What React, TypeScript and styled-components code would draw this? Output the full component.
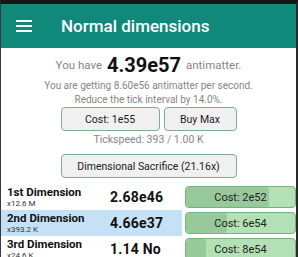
import React from "react";
import styled, { createGlobalStyle } from "styled-components";

const Global = createGlobalStyle`
  html, body { margin: 0; padding: 0; background: #ffffff; }
  body { font-family: Roboto, "Noto Sans", Arial, sans-serif; }
`;

const Frame = styled.div`
  width: 298px;
  height: 257px;
  box-sizing: border-box;
  border-top: 4px solid #161616;
  border-right: 2px solid #2a2a2a;
  border-left: 1px solid #3a3a3a;
  overflow: hidden;
  background: #fff;
  display: flex;
  flex-direction: column;
`;

const Header = styled.div`
  height: 44px;
  flex: none;
  background: #10897a;
  display: flex;
  align-items: center;
  padding-left: 15px;
  gap: 29px;
`;

const Title = styled.div`
  color: #fff;
  font-size: 17px;
  font-weight: 500;
`;

const Center = styled.div`
  display: flex;
  flex-direction: column;
  align-items: center;
`;

const HaveLine = styled.div`
  margin-top: 4px;
  height: 26px;
  display: flex;
  align-items: center;
  gap: 5px;
  color: #858585;
  font-size: 11.5px;
`;

const Big = styled.span`
  color: #111;
  font-size: 20px;
  font-weight: 700;
`;

const Info = styled.div<{ $size: number; $h: number }>`
  color: #868686;
  font-size: ${(p) => p.$size}px;
  height: ${(p) => p.$h}px;
  line-height: ${(p) => p.$h}px;
`;

const ButtonRow = styled.div<{ $mt: number }>`
  display: flex;
  gap: 4px;
  margin-top: ${(p) => p.$mt}px;
`;

const GrayButton = styled.div<{ $w: number }>`
  width: ${(p) => p.$w}px;
  height: 24px;
  box-sizing: border-box;
  border: 1px solid #7fae86;
  border-radius: 4px;
  background: #f0f0f0;
  color: #222;
  font-size: 10.5px;
  display: flex;
  align-items: center;
  justify-content: center;
`;

const Rows = styled.div`
  margin-top: 6px;
  display: flex;
  flex-direction: column;
`;

const Row = styled.div<{ $hl?: boolean }>`
  height: 26px;
  display: flex;
  align-items: center;
  background: ${(p) => (p.$hl ? "#c5e1f6" : "transparent")};
  margin-right: 114px;
  padding-left: 6px;
  position: relative;
`;

const Names = styled.div`
  width: 103px;
  display: flex;
  flex-direction: column;
`;

const Name = styled.div`
  font-size: 11.5px;
  font-weight: 700;
  color: #111;
  line-height: 13px;
`;

const Mult = styled.div`
  font-size: 8px;
  color: #333;
  line-height: 10px;
`;

const Amount = styled.div`
  font-size: 14px;
  font-weight: 700;
  color: #111;
  letter-spacing: 0.2px;
`;

const CostButton = styled.div`
  position: absolute;
  left: 184px;
  top: 2px;
  width: 111px;
  height: 22px;
  box-sizing: border-box;
  border: 1px solid #76b27c;
  border-radius: 4px;
  background: #b3e0b5;
  overflow: hidden;
  display: flex;
  align-items: center;
  justify-content: center;
`;

const Progress = styled.div`
  position: absolute;
  left: 0;
  top: 0;
  bottom: 0;
  background: #97c99b;
  border-radius: 3px;
`;

const CostLabel = styled.span`
  position: relative;
  font-size: 11px;
  color: #222;
`;

const Hamburger = () => (
  <svg width="16" height="12" viewBox="0 0 16 12">
    <rect x="0" y="0" width="16" height="2" fill="#fff" />
    <rect x="0" y="5" width="16" height="2" fill="#fff" />
    <rect x="0" y="10" width="16" height="2" fill="#fff" />
  </svg>
);

const dims = [
  { name: "1st Dimension", mult: "x12.6 M", amount: "2.68e46", cost: "Cost: 2e52", p: 76 },
  { name: "2nd Dimension", mult: "x393.2 K", amount: "4.66e37", cost: "Cost: 6e54", p: 38, hl: true },
  { name: "3rd Dimension", mult: "x24.6 K", amount: "1.14 No", cost: "Cost: 8e54", p: 18 },
];

export default function App() {
  return (
    <>
      <Global />
      <Frame>
        <Header>
          <Hamburger />
          <Title>Normal dimensions</Title>
        </Header>
        <Center>
          <HaveLine>
            You have <Big>4.39e57</Big> antimatter.
          </HaveLine>
          <Info $size={10} $h={16}>You are getting 8.60e56 antimatter per second.</Info>
          <Info $size={10} $h={12}>Reduce the tick interval by 14.0%.</Info>
          <ButtonRow $mt={1}>
            <GrayButton $w={99}>Cost: 1e55</GrayButton>
            <GrayButton $w={73}>Buy Max</GrayButton>
          </ButtonRow>
          <Info $size={10.5} $h={18}>Tickspeed: 393 / 1.00 K</Info>
          <ButtonRow $mt={5}>
            <GrayButton $w={176}>Dimensional Sacrifice (21.16x)</GrayButton>
          </ButtonRow>
        </Center>
        <Rows>
          {dims.map((d) => (
            <Row key={d.name} $hl={d.hl}>
              <Names>
                <Name>{d.name}</Name>
                <Mult>{d.mult}</Mult>
              </Names>
              <Amount>{d.amount}</Amount>
              <CostButton>
                <Progress style={{ width: `${d.p}%` }} />
                <CostLabel>{d.cost}</CostLabel>
              </CostButton>
            </Row>
          ))}
        </Rows>
      </Frame>
    </>
  );
}
